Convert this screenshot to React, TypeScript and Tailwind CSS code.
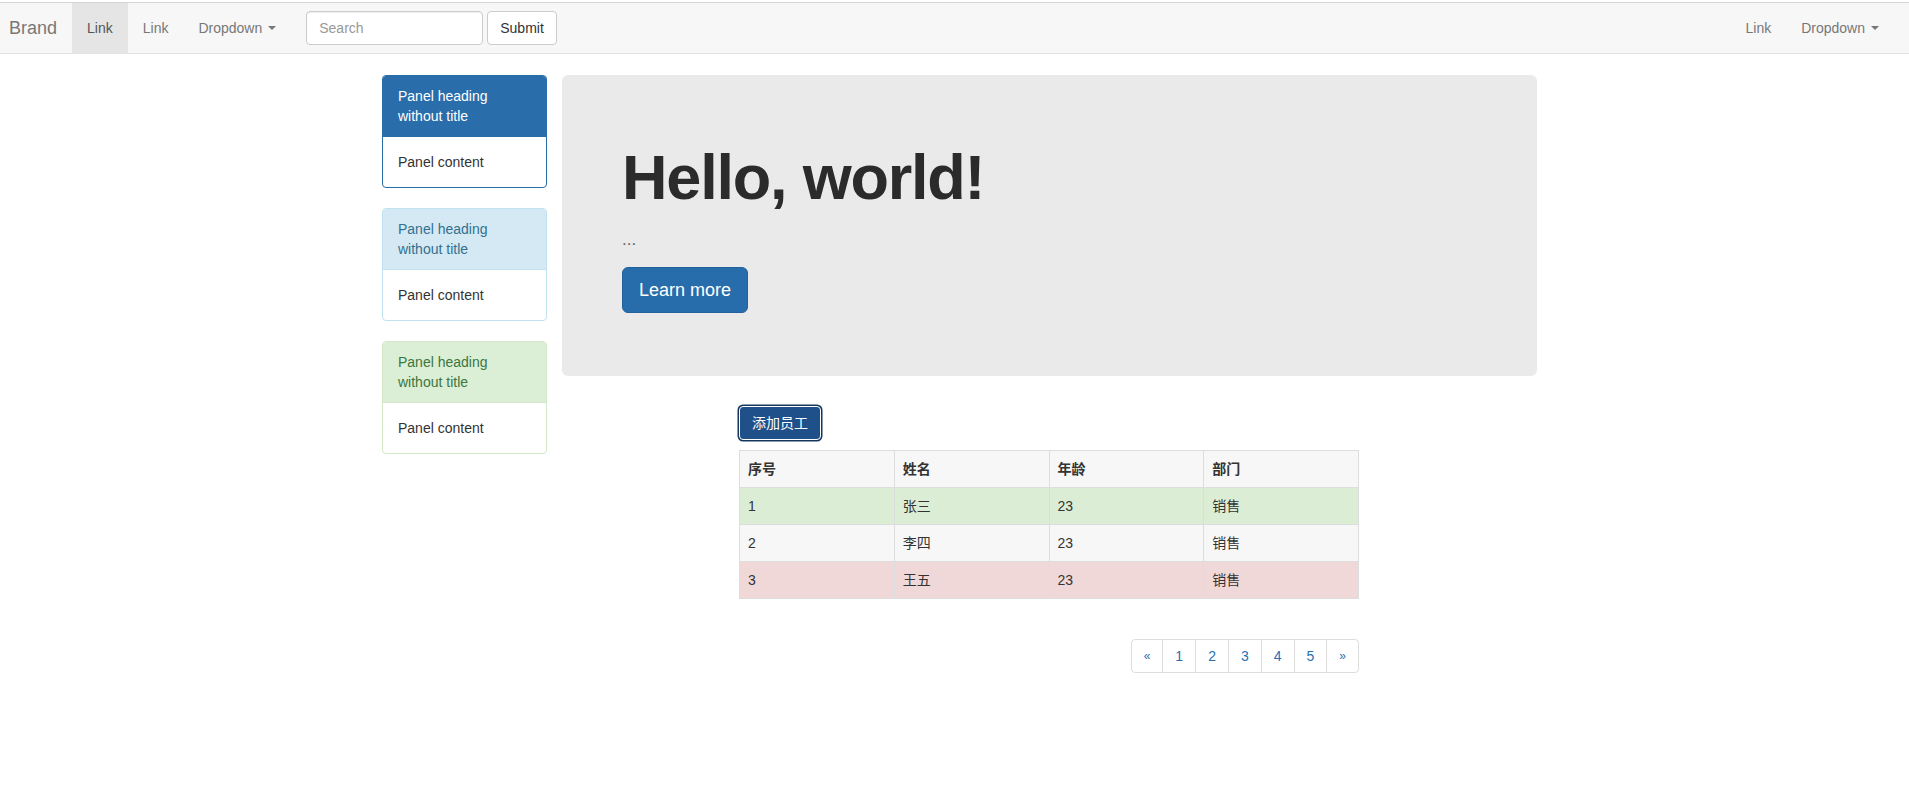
import React from "react";

interface Employee {
  id: number;
  name: string;
  age: number;
  dept: string;
  tone: "success" | "plain" | "danger";
}

const employees: Employee[] = [
  { id: 1, name: "张三", age: 23, dept: "销售", tone: "success" },
  { id: 2, name: "李四", age: 23, dept: "销售", tone: "plain" },
  { id: 3, name: "王五", age: 23, dept: "销售", tone: "danger" },
];

const rowBg: Record<Employee["tone"], string> = {
  success: "bg-[#dbeed5]",
  plain: "bg-[#f7f7f7]",
  danger: "bg-[#f1d8d8]",
};

function Caret() {
  return (
    <span className="ml-[6px] inline-block h-0 w-0 border-x-[4px] border-t-[4px] border-x-transparent border-t-[#777] align-middle" />
  );
}

function Navbar() {
  return (
    <nav className="mt-[2px] flex h-[52px] items-stretch justify-between border-y border-t-[#d4d4d4] border-b-[#e3e3e3] bg-[#f7f7f7] text-[14px] text-[#777]">
      <div className="flex items-stretch">
        <a className="flex items-center pl-[9px] pr-[15px] text-[18px] text-[#777]">Brand</a>
        <a className="flex items-center bg-[#e5e5e5] px-[15px] text-[#555]">Link</a>
        <a className="flex items-center px-[15px]">Link</a>
        <a className="flex items-center px-[15px]">
          Dropdown
          <Caret />
        </a>
        <form className="flex items-center gap-[4px] px-[15px]">
          <input
            placeholder="Search"
            className="h-[34px] w-[177px] rounded-[4px] border border-[#ccc] bg-white px-[12px] text-[14px] text-[#555] shadow-[inset_0_1px_1px_rgba(0,0,0,0.075)] placeholder:text-[#999]"
          />
          <button
            type="button"
            className="h-[34px] rounded-[4px] border border-[#ccc] bg-white px-[12px] text-[14px] font-normal text-[#333]"
          >
            Submit
          </button>
        </form>
      </div>
      <div className="flex items-stretch pr-[15px]">
        <a className="flex items-center px-[15px]">Link</a>
        <a className="flex items-center px-[15px]">
          Dropdown
          <Caret />
        </a>
      </div>
    </nav>
  );
}

function Panel({
  border,
  headBg,
  headText,
}: {
  border: string;
  headBg: string;
  headText: string;
}) {
  return (
    <div className={`mb-[20px] overflow-hidden rounded-[4px] border bg-white ${border}`}>
      <div className={`border-b px-[15px] py-[10px] leading-[20px] ${headBg} ${headText} ${border}`}>
        Panel heading without title
      </div>
      <div className="p-[15px] leading-[20px] text-[#333]">Panel content</div>
    </div>
  );
}

function Jumbotron() {
  return (
    <div className="mb-[30px] rounded-[6px] bg-[#eaeaea] px-[60px] py-[48px] text-[#333]">
      <h1 className="mb-[10px] mt-[20px] text-[63px] font-bold leading-[1.1] tracking-[-1.2px] text-[#2b2b2b]">
        Hello, world!
      </h1>
      <p className="mb-[15px] pt-[5px] text-[17px] font-extralight leading-[25px] text-[#666]">...</p>
      <p className="mb-[15px] flex">
        <button
          type="button"
          className="h-[46px] rounded-[6px] border border-[#24609a] bg-[#286dab] px-[16px] text-[18px] text-white"
        >
          Learn more
        </button>
      </p>
    </div>
  );
}

function EmployeeTable() {
  const cell = "border border-[#ddd] px-[8px] py-[8px] leading-[20px] text-left";
  return (
    <div className="ml-[177px] flex w-[620px] flex-col">
      <div>
        <button
          type="button"
          className="mb-[10px] h-[34px] rounded-[4px] border border-white bg-[#20508a] px-[12px] text-[14px] text-white shadow-[0_0_0_1.5px_#15365e]"
        >
          添加员工
        </button>
      </div>
      <table className="mb-[20px] w-full table-fixed border-collapse text-[14px] text-[#333]">
        <thead>
          <tr className="bg-[#f7f7f7]">
            <th className={`${cell} font-bold`}>序号</th>
            <th className={`${cell} font-bold`}>姓名</th>
            <th className={`${cell} font-bold`}>年龄</th>
            <th className={`${cell} font-bold`}>部门</th>
          </tr>
        </thead>
        <tbody>
          {employees.map(e => (
            <tr key={e.id} className={rowBg[e.tone]}>
              <td className={cell}>{e.id}</td>
              <td className={cell}>{e.name}</td>
              <td className={cell}>{e.age}</td>
              <td className={cell}>{e.dept}</td>
            </tr>
          ))}
        </tbody>
      </table>
      <div className="mt-[20px] flex justify-end">
        <ul className="flex text-[14px] text-[#2a6fb0]">
          {["«", "1", "2", "3", "4", "5", "»"].map((p, i) => (
            <li
              key={p}
              className={`-ml-px flex h-[34px] items-center border border-[#ddd] bg-white px-[12px] leading-[20px] ${
                i === 0 ? "ml-0 rounded-l-[4px] text-[12px]" : ""
              } ${i === 6 ? "rounded-r-[4px] text-[12px]" : ""}`}
            >
              {p}
            </li>
          ))}
        </ul>
      </div>
    </div>
  );
}

export default function App() {
  return (
    <div className="min-h-screen bg-white font-['Liberation_Sans','Noto_Sans_CJK_SC',sans-serif] text-[14px] text-[#333]">
      <Navbar />
      <div className="w-[1904px]">
        <main className="mx-auto mt-[21px] flex w-[1170px] items-start">
          <aside className="w-[195px] shrink-0 px-[15px]">
            <Panel border="border-[#2a6dab]" headBg="bg-[#2a6dab]" headText="text-white" />
            <Panel border="border-[#bfe3ef]" headBg="bg-[#d4e9f4]" headText="text-[#31708f]" />
            <Panel border="border-[#d3e8c8]" headBg="bg-[#dbeed6]" headText="text-[#3c763d]" />
          </aside>
          <section className="w-[975px] shrink-0">
            <Jumbotron />
            <EmployeeTable />
          </section>
        </main>
      </div>
    </div>
  );
}
